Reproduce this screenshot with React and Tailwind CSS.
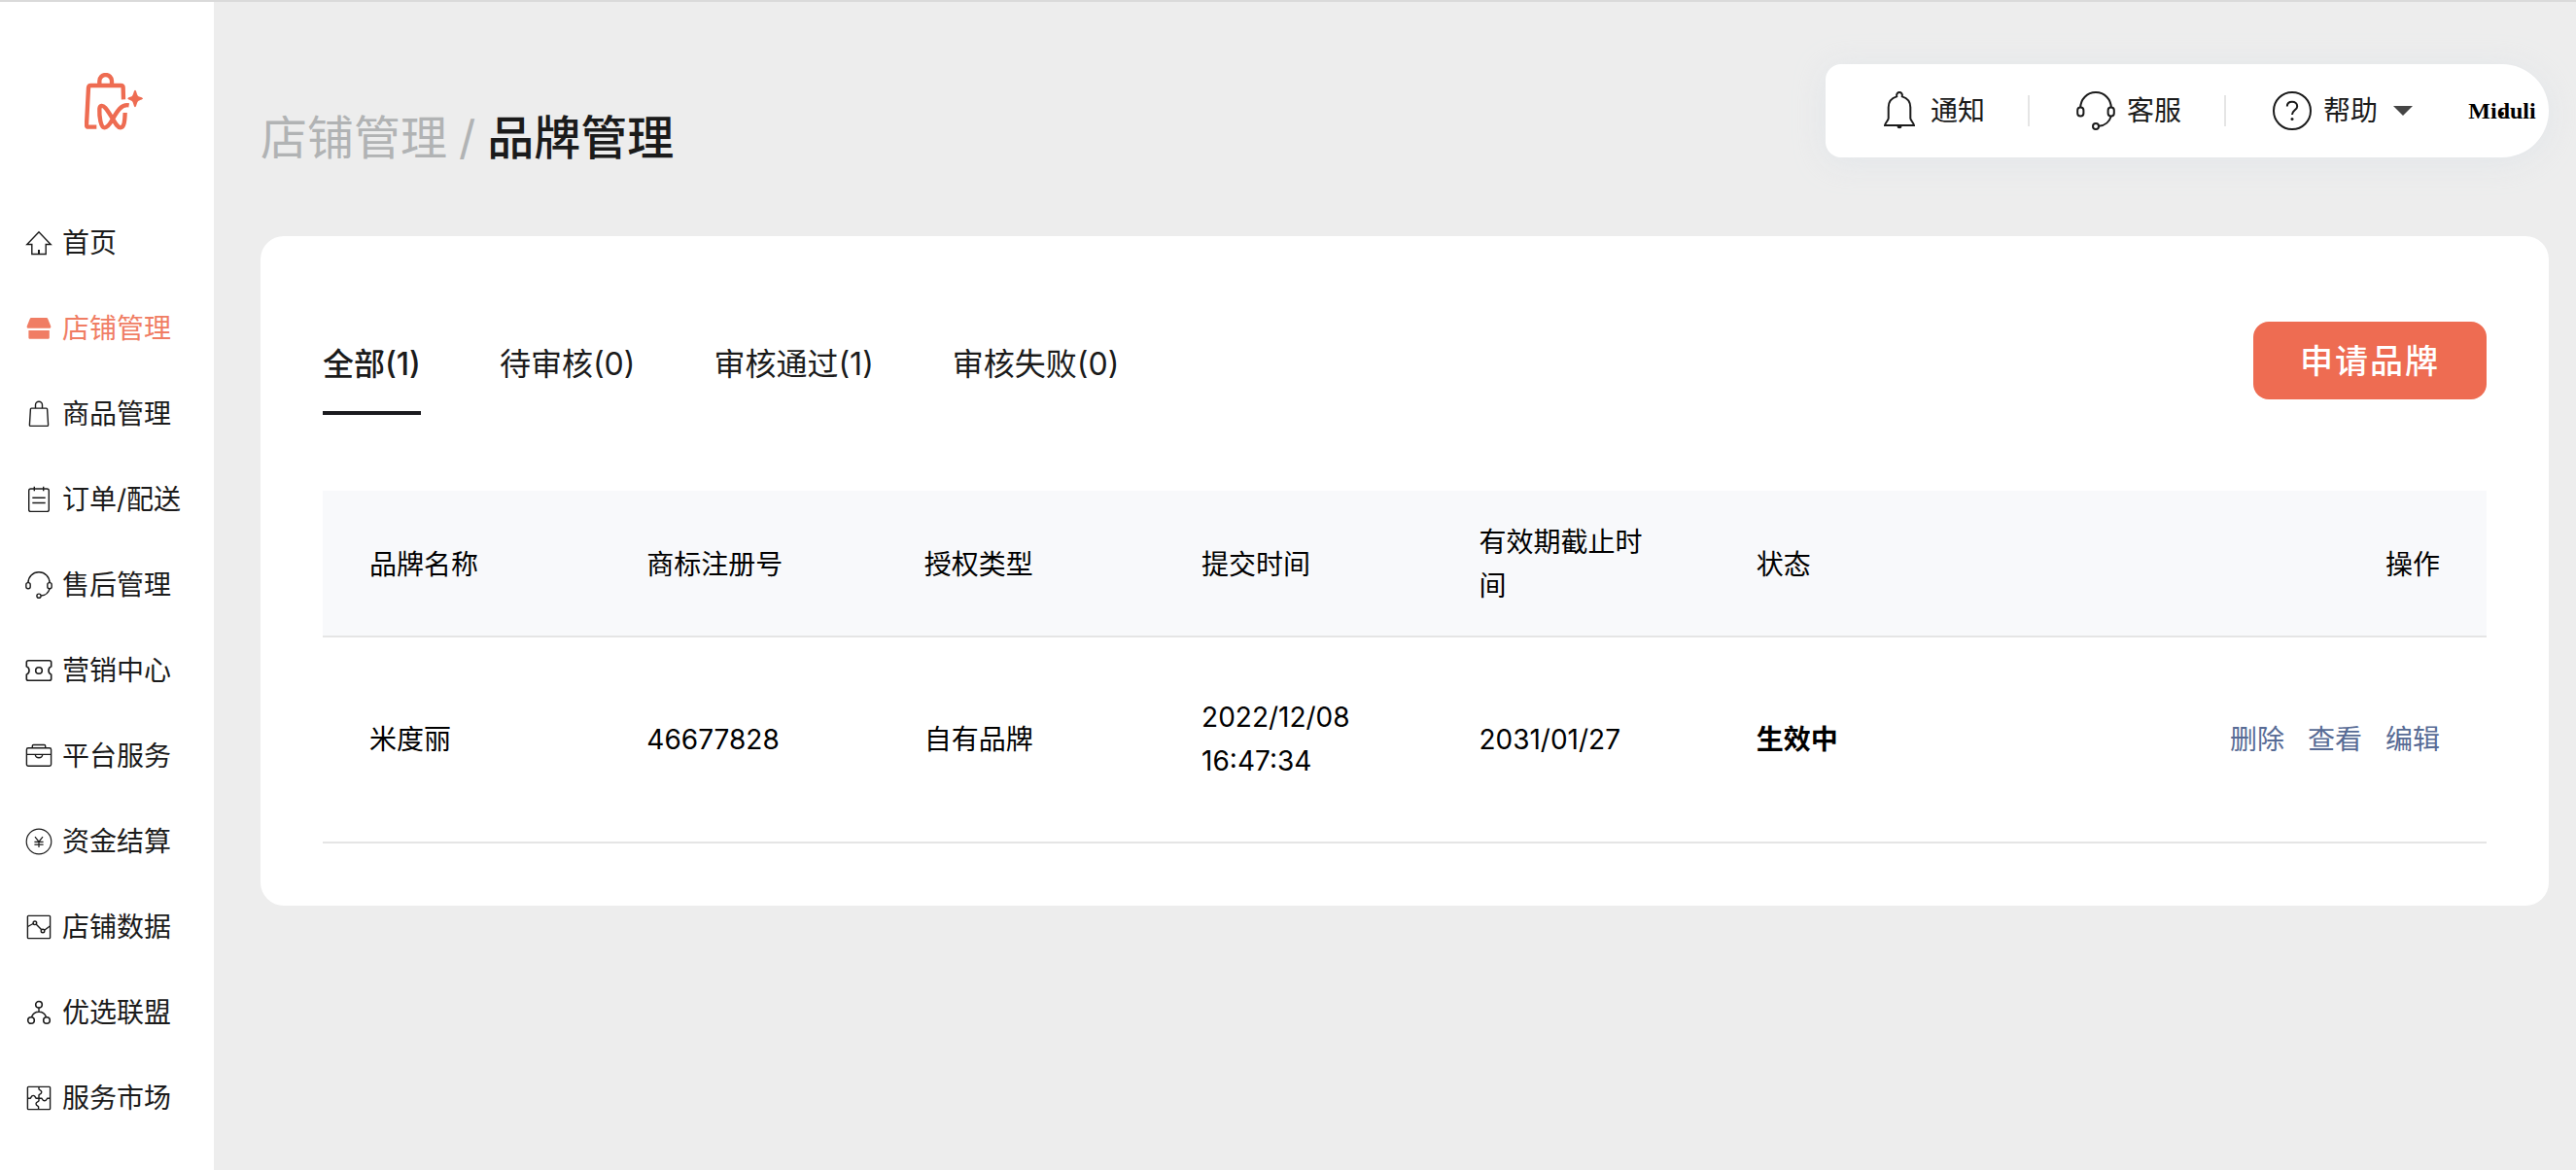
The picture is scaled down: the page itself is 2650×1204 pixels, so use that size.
import clsx from 'clsx';

const HomeIcon = () => (
  <>
    <path d="M14 2.8 1.8 15.5h5v10h14.4v-10h5z" />
    <path d="M14 21v4.5" strokeWidth="2" />
  </>
);

const StoreIcon = () => (
  <>
    <path d="M6.6 3h14.8c1 0 1.6.5 2 1.4l2.8 7.2c.4 1.2 0 2.1-1 2.1H2.8c-1 0-1.4-.9-1-2.1l2.8-7.2c.4-.9 1-1.4 2-1.4z" fill="currentColor" stroke="none" />
    <path d="M3.4 16h21.4v7.2c0 1-.6 1.5-1.5 1.5H4.9c-.9 0-1.5-.5-1.5-1.5z" fill="currentColor" stroke="none" />
  </>
);

const GoodsIcon = () => (
  <>
    <path d="M6.3 8.1h15.4c.6 0 .9.3.9.9l1 16.2c0 .8-.3 1.2-1 1.2H5.4c-.7 0-1-.4-1-1.2L5.4 9c0-.6.3-.9.9-.9z" />
    <path d="M10.5 8V4.8a3.5 3.5 0 0 1 7 0V8" />
  </>
);

const OrderIcon = () => (
  <>
    <rect x="3.7" y="3" width="20.6" height="23.4" rx="2" />
    <path d="M9.3.8v4.4M18.7.8v4.4M7.3 12.3h13.4M7.3 17.5h13.4" />
  </>
);

// drawn on a 40 grid, shared by the sidebar and the top bar
const HeadsetIcon = () => (
  <>
    <path d="M4.2 17C4.2 8 11 1.1 20 1.1S35.8 8 35.8 17" />
    <rect x="1.2" y="16.6" width="6.2" height="8.8" rx="3" />
    <rect x="32.6" y="16.6" width="6.2" height="8.8" rx="3" />
    <path d="M35.8 25.5c-1.6 5.6-6.4 9.8-12.6 10.3" />
    <circle cx="20" cy="36" r="3" />
  </>
);

const TicketIcon = () => (
  <>
    <path d="M3.2 3.7h21.6c1.2 0 1.9.7 1.9 1.9v4.2c-3.6 1.6-3.6 6.8 0 8.4v4.2c0 1.2-.7 1.9-1.9 1.9H3.2c-1.2 0-1.9-.7-1.9-1.9v-4.2c3.6-1.6 3.6-6.8 0-8.4V5.6c0-1.2.7-1.9 1.9-1.9z" strokeWidth="1.6" />
    <circle cx="14" cy="14" r="3.3" strokeWidth="1.6" />
  </>
);

const BriefcaseIcon = () => (
  <>
    <rect x="1.4" y="5.8" width="25.2" height="18.4" rx="1.6" />
    <path d="M7.3 5.6V3.7c0-.8.4-1.2 1.2-1.2h11c.8 0 1.2.4 1.2 1.2v1.9M1.4 12.4h25.2M10.3 12.6a3.7 3.2 0 0 0 7.4 0" />
  </>
);

const YuanIcon = () => (
  <>
    <circle cx="14" cy="14" r="12.8" strokeWidth="1.2" />
    <path d="m10 9.2 4 5 4-5M14 14.2V20M9.4 14.3h9.2M9.4 17.2h9.2" strokeWidth="1.2" />
  </>
);

const ChartIcon = () => (
  <>
    <rect x="2.4" y="2.4" width="23.2" height="23.2" rx=".8" />
    <path d="m2.6 13.5 5.5-3M11.3 11.2l5.2 5.4M19.6 17.2l5.8-4.2" />
    <circle cx="9.9" cy="9.8" r="1.8" />
    <circle cx="18" cy="18" r="1.8" />
  </>
);

const UnionIcon = () => (
  <>
    <circle cx="14" cy="5.8" r="3.3" strokeWidth="1.6" />
    <circle cx="6" cy="22" r="3.3" strokeWidth="1.6" />
    <circle cx="22" cy="22" r="3.3" strokeWidth="1.6" />
    <path d="M14 9.2v4M6.5 18.6c1.2-3.4 4-5.4 7.5-5.4s6.3 2 7.5 5.4" />
  </>
);

const PuzzleIcon = () => (
  <>
    <rect x="2.4" y="2.4" width="23.2" height="23.2" rx=".8" />
    <path d="M2.6 14.2h2.6c.7 0 .7-2.8 3-2.8s2.3 2.8 3 2.8h5.6c.7 0 .7 2.6 3 2.6s2.3-2.6 3-2.6h2.6" />
    <path d="M14 2.6v2.2c0 .8 2.8.8 2.8 3s-2.8 2.2-2.8 3v6c0 .8-3 .8-3 3s2.6 2.2 2.6 3v2.6" />
  </>
);

const BellIcon = () => (
  <>
    <path d="M17.2 5.4C16-.4 24-.4 22.8 5.4c5 1.4 8.5 5.6 8.5 11.2v11.2c0 2 3.7 5 3.7 7.2H5c0-2.2 3.7-5.2 3.7-7.2V16.6c0-5.6 3.5-9.8 8.5-11.2z" />
    <path d="M17.5 36a2.5 2.2 0 0 0 5 0z" fill="currentColor" stroke="none" />
  </>
);

const HelpIcon = () => (
  <>
    <circle cx="20" cy="20" r="19" />
    <path d="M14.8 15.6c0-3 2.2-4.8 5.2-4.8s5.2 1.8 5.2 4.6c0 3.8-5.2 4.2-5.2 8.6" />
    <circle cx="20" cy="28.6" r="1.5" fill="currentColor" stroke="none" />
  </>
);

const navItems = [
  { icon: HomeIcon, label: '首页' },
  { icon: StoreIcon, label: '店铺管理', active: true },
  { icon: GoodsIcon, label: '商品管理' },
  { icon: OrderIcon, label: '订单/配送' },
  { icon: HeadsetIcon, label: '售后管理', grid: 40 },
  { icon: TicketIcon, label: '营销中心' },
  { icon: BriefcaseIcon, label: '平台服务' },
  { icon: YuanIcon, label: '资金结算' },
  { icon: ChartIcon, label: '店铺数据' },
  { icon: UnionIcon, label: '优选联盟' },
  { icon: PuzzleIcon, label: '服务市场' },
];

const topItems = [
  { icon: BellIcon, label: '通知' },
  { icon: HeadsetIcon, label: '客服' },
  { icon: HelpIcon, label: '帮助', caret: true },
];

const tabs = ['全部(1)', '待审核(0)', '审核通过(1)', '审核失败(0)'];

const columns = ['品牌名称', '商标注册号', '授权类型', '提交时间', '有效期截止时间', '状态'];

const brands = [
  {
    name: '米度丽',
    regNo: '46677828',
    type: '自有品牌',
    submittedAt: '2022/12/08 16:47:34',
    expiresAt: '2031/01/27',
    status: '生效中',
  },
];

function Icon({ icon: Shape, grid = 28, className }) {
  return (
    <svg
      viewBox={`0 0 ${grid} ${grid}`}
      className={clsx('shrink-0', className)}
      fill="none"
      stroke="currentColor"
      strokeWidth={grid === 40 ? 2 : 1.4}
      aria-hidden="true"
    >
      <Shape />
    </svg>
  );
}

function Logo() {
  return (
    <svg viewBox="0 0 180 180" className="h-15 w-15" fill="none" stroke="#ee6c52" strokeWidth="13" aria-hidden="true">
      <path d="M46 36V25a19 19 0 0 1 38 0v11" />
      <path d="M120 82l-1-36q0-7-7-7H19q-6 0-7 7L6 160q0 7 6 7h25" />
      <path d="M137 100C113 96 101 118 87 142c-8 15-16 27-25 27-12 0-17-34-16-58 1-12 10-12 18-3s16 23 23 34c8 14 15 27 24 27 11 0 13-19 14-46" />
      <path d="M156 53c4 0 5 14 9 18s15 4 15 8-11 5-15 9-5 18-9 18-5-14-9-18-14-5-14-9 10-4 14-8 5-18 9-18z" fill="#ee6c52" stroke="none" />
    </svg>
  );
}

function Sidebar() {
  return (
    <aside className="w-[220px] shrink-0 bg-white">
      <div className="pt-[73px] pb-[71px] pl-[87px]">
        <Logo />
      </div>
      <nav>
        {navItems.map((item) => (
          <a
            key={item.label}
            href="#"
            className={clsx(
              'flex h-22 items-center gap-[10px] pl-[26px] whitespace-nowrap',
              item.active ? 'text-[#f07d64]' : 'text-[#1b1b1b]'
            )}
          >
            <Icon icon={item.icon} grid={item.grid} className="h-7 w-7" />
            {item.label}
          </a>
        ))}
      </nav>
    </aside>
  );
}

function TopBar() {
  return (
    <div className="flex h-24 items-center rounded-l-2xl rounded-r-[48px] bg-white px-2 shadow-[0_4px_32px_rgba(210,220,230,0.4)]">
      {topItems.map((item, i) => (
        <div key={item.label} className="flex items-center">
          {i > 0 && <span className="h-8 w-[2px] bg-[#e5e5e5]" />}
          <button
            type="button"
            className={clsx('flex items-center gap-3 pl-12', item.caret ? 'pr-13' : 'pr-11')}
          >
            <Icon icon={item.icon} grid={40} className="h-10 w-10" />
            {item.label}
            {item.caret && (
              <svg viewBox="0 0 20 10" className="ml-1 h-[10px] w-5" fill="#454545" aria-hidden="true">
                <path d="M0 0h20L10 10z" />
              </svg>
            )}
          </button>
        </div>
      ))}
      <a
        href="#"
        className="relative flex h-20 w-20 items-center justify-center rounded-full font-['Liberation_Serif',serif] text-2xl font-bold text-black"
      >
        Miduli
        <span className="absolute top-[41px] left-[38px] h-1 w-1 rounded-full bg-black" />
      </a>
    </div>
  );
}

function BrandTable() {
  return (
    <table className="w-full table-fixed leading-[45px] text-black">
      <thead>
        <tr className="border-b-2 border-[#e5e5e5] bg-[#f8f9fb]">
          {columns.map((col) => (
            <th key={col} className="w-[12.82%] px-12 pt-[31px] pb-7 text-left font-normal">
              {col}
            </th>
          ))}
          <th className="px-12 pt-[31px] pb-7 text-right font-normal">操作</th>
        </tr>
      </thead>
      <tbody>
        {brands.map((brand) => (
          <tr key={brand.regNo} className="border-b-2 border-[#e5e5e5]">
            <td className="px-12 py-[60px]">{brand.name}</td>
            <td className="px-12 py-[60px]">{brand.regNo}</td>
            <td className="px-12 py-[60px]">{brand.type}</td>
            <td className="px-12 py-[60px]">{brand.submittedAt}</td>
            <td className="px-12 py-[60px]">{brand.expiresAt}</td>
            <td className="px-12 py-[60px] font-bold">{brand.status}</td>
            <td className="px-12 py-[60px]">
              <div className="flex justify-end gap-6 text-[#576b95]">
                <a href="#">删除</a>
                <a href="#">查看</a>
                <a href="#">编辑</a>
              </div>
            </td>
          </tr>
        ))}
      </tbody>
    </table>
  );
}

function App() {
  return (
    <div className="flex min-h-screen border-t-2 border-[#dadada] bg-[#ededed] font-['Inter','Noto_Sans_CJK_SC',sans-serif] text-[28px] leading-[45px] text-[#1b1b1b]">
      <Sidebar />

      <main className="min-w-0 flex-1 pr-7 pl-12">
        <header className="flex items-start justify-between pt-16">
          <h1 className="mt-10 mb-[65px] flex gap-3 text-5xl leading-[72px] font-medium">
            <a href="#" className="font-normal text-[#b1b3b4]">店铺管理</a>
            <span className="font-normal text-[#b1b3b4]">/</span>
            品牌管理
          </h1>
          <TopBar />
        </header>

        <section className="rounded-3xl bg-white px-16 pt-22 pb-16">
          <div className="mb-[78px] flex items-start justify-between">
            <div role="tablist" className="mt-5 flex gap-[81px]">
              {tabs.map((tab, i) => (
                <button
                  key={tab}
                  type="button"
                  role="tab"
                  aria-selected={i === 0}
                  className={clsx(
                    'border-b-4 pb-6 text-[32px] leading-12',
                    i === 0 ? 'border-[#1b1b1f] font-medium' : 'border-transparent'
                  )}
                >
                  {tab}
                </button>
              ))}
            </div>
            <button
              type="button"
              className="h-20 w-60 rounded-2xl bg-[#ee6c52] text-[34px] font-medium tracking-[2px] text-white"
            >
              申请品牌
            </button>
          </div>

          <BrandTable />
        </section>
      </main>
    </div>
  );
}

export default App;
